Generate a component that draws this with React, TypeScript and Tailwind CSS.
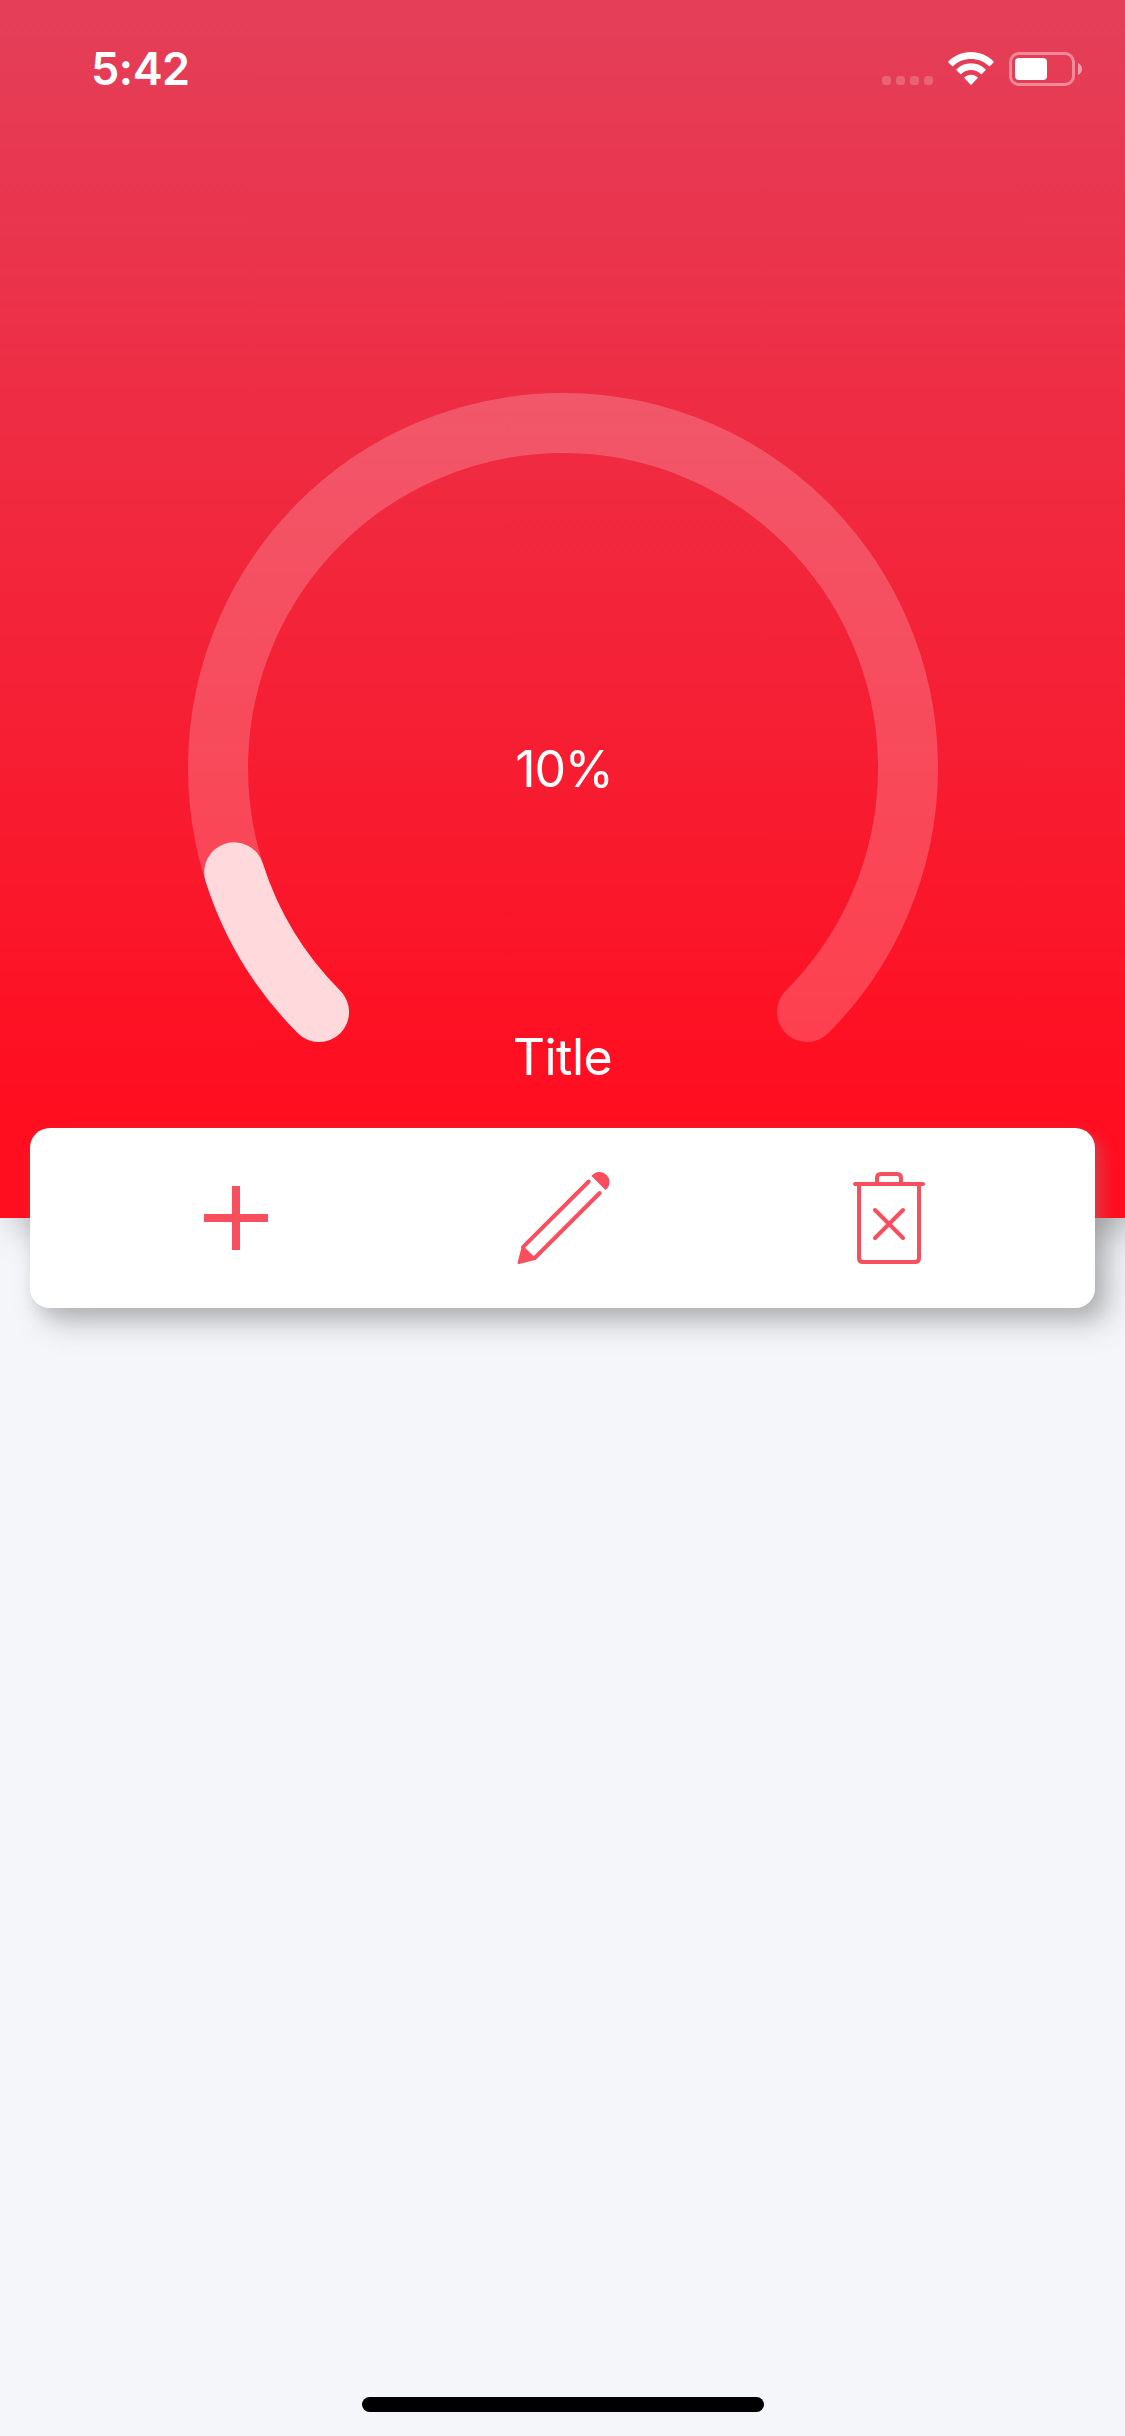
const ACCENT = "#f84e5d";

function StatusBar() {
  return (
    <div className="flex h-[132px] items-start justify-between pl-[91px] pr-[42px] text-white">
      <span className="mt-[42px] text-[45px] leading-[54px] font-semibold tracking-[-0.5px]">5:42</span>
      <div className="mt-[48px] flex items-start">
        <div className="mt-[28px] flex gap-[5px]">
          {[0, 1, 2, 3].map((i) => (
            <span key={i} className="h-[9px] w-[9px] rounded-[3.5px] bg-white/20" />
          ))}
        </div>
        <svg className="mt-[4px] ml-[15px]" width="46" height="34" viewBox="0 0 46 34" fill="#fff">
          <path d="M23 0C32 0 40 3.600 45.600 9.400Q46 9.900 45.600 10.400L42 14Q41.400 14.500 40.900 14C36 9.400 29.800 7 23 7S10 9.400 5.100 14Q4.600 14.500 4 14L.4 10.400Q0 9.900.4 9.400C6 3.600 14 0 23 0Z" />
          <path d="M23 11.200C28.700 11.200 33.700 13.400 37.500 17.300Q37.900 17.800 37.500 18.300L33.800 22Q33.300 22.400 32.800 22C30 19.500 26.800 18.100 23 18.100S16 19.500 13.200 22Q12.700 22.400 12.200 22L8.500 18.300Q8.100 17.800 8.500 17.300C12.300 13.400 17.300 11.200 23 11.200Z" />
          <path d="M23 22.700C25.500 22.700 27.800 23.600 29.500 25.200Q30 25.800 29.500 26.300L23.600 32.500Q23 33 22.400 32.500L16.500 26.300Q16 25.800 16.500 25.200C18.200 23.600 20.500 22.700 23 22.700Z" />
        </svg>
        <svg className="mt-[4px] ml-[15px]" width="74" height="34" viewBox="0 0 74 34" fill="none">
          <rect x="1.500" y="1.500" width="63" height="31" rx="8.500" stroke="#fff" strokeOpacity=".4" strokeWidth="3" />
          <rect x="6" y="6" width="32" height="22" rx="4" fill="#fff" />
          <path d="M69 11C71.500 12 73 14.500 73 17S71.500 22 69 23Z" fill="#fff" fillOpacity=".5" />
        </svg>
      </div>
    </div>
  );
}

function Gauge() {
  return (
    <svg className="absolute inset-0" width="750" height="750" viewBox="0 0 750 750" fill="none" strokeWidth="60" strokeLinecap="round">
      <path d="M131.050 618.950A345 345 0 1 1 618.950 618.950" stroke="#fff" strokeOpacity=".2" />
      <path d="M131.050 618.950A345 345 0 0 1 46.150 479.300" stroke="#ffd9dc" />
    </svg>
  );
}

function PlusIcon() {
  return (
    <svg width="64" height="64" viewBox="0 0 64 64" fill={ACCENT}>
      <path d="M28 0h8v28h28v8H36v28h-8V36H0v-8h28Z" />
    </svg>
  );
}

function PencilIcon() {
  return (
    <svg className="overflow-visible" width="92" height="92" viewBox="0 0 92 92" fill="none" stroke={ACCENT} strokeWidth="4" strokeLinecap="round" strokeLinejoin="round">
      <path d="M71.700 9.500L6 75.200M82.700 21L17.700 86" />
      <path d="M5.800 75.500L1.800 90.700L17.500 86.700Z" fill={ACCENT} strokeWidth="2.500" />
      <path d="M74.500 4A10 10 0 1 1 88.500 18Z" fill={ACCENT} stroke="none" />
    </svg>
  );
}

function TrashIcon() {
  return (
    <svg width="72" height="92" viewBox="0 0 72 92" fill="none" stroke={ACCENT} strokeWidth="4" strokeLinecap="round" strokeLinejoin="round">
      <path d="M2 12h68M6 12v74q0 4 4 4h52q4 0 4-4V12M24 12V6q0-4 4-4h16q4 0 4 4v6M22 38l28 28M50 38L22 66" />
    </svg>
  );
}

function ActionCard() {
  return (
    <>
      {/* The deep shadow falls beneath the header; the card itself sits above it. */}
      <div className="mx-[30px] -mt-[90px] h-[180px] shrink-0 rounded-[20px] shadow-[15px_15px_30px_rgba(100,100,100,0.36)]" />
      <div className="relative z-20 mx-[30px] -mt-[180px] grid h-[180px] shrink-0 grid-cols-[412px_241px_412px] rounded-[20px] bg-white shadow-[6px_8px_16px_rgba(150,150,150,0.36)]">
        <button aria-label="Add" className="flex items-center justify-start pl-[174px]"><PlusIcon /></button>
        <button aria-label="Edit" className="flex items-center justify-center"><PencilIcon /></button>
        <button aria-label="Delete" className="flex items-center justify-start pl-[170px]"><TrashIcon /></button>
      </div>
    </>
  );
}

export default function App() {
  return (
    <main className="flex h-[2436px] w-[1125px] flex-col overflow-hidden bg-[#f4f6fa] font-['Inter',sans-serif]">
      <header className="relative z-10 h-[1218px] shrink-0 bg-linear-to-b/srgb from-[#e43f59] to-[#ff0e20] to-[90%] shadow-[15px_12px_30px_rgba(100,100,100,0.38)]">
        <StatusBar />
        <section className="relative mt-[261px] ml-[187.5px] flex h-[750px] w-[750px] flex-col items-center text-[50px] leading-[60px] text-white">
          <Gauge />
          <span className="relative mt-[346px] ml-[3px] tracking-[-1.2px]">10%</span>
          <span className="relative mt-[228px] tracking-[-0.5px]">Title</span>
        </section>
      </header>
      <ActionCard />
      <div className="mx-auto mt-auto mb-[24px] h-[15px] w-[402px] shrink-0 rounded-full bg-black" />
    </main>
  );
}
